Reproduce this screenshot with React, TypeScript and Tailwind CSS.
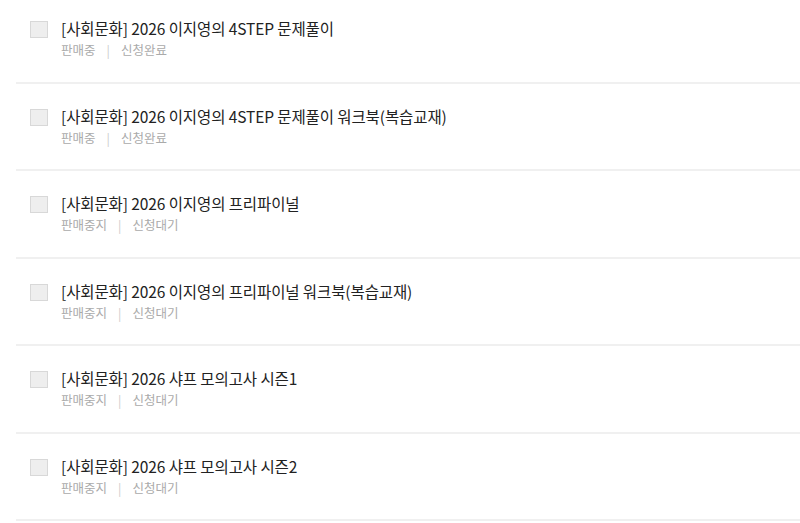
import React from 'react';

type Item = { title: string; sale: string; apply: string };

const items: Item[] = [
  { title: '[사회문화] 2026 이지영의 4STEP 문제풀이', sale: '판매중', apply: '신청완료' },
  { title: '[사회문화] 2026 이지영의 4STEP 문제풀이 워크북(복습교재)', sale: '판매중', apply: '신청완료' },
  { title: '[사회문화] 2026 이지영의 프리파이널', sale: '판매중지', apply: '신청대기' },
  { title: '[사회문화] 2026 이지영의 프리파이널 워크북(복습교재)', sale: '판매중지', apply: '신청대기' },
  { title: '[사회문화] 2026 샤프 모의고사 시즌1', sale: '판매중지', apply: '신청대기' },
  { title: '[사회문화] 2026 샤프 모의고사 시즌2', sale: '판매중지', apply: '신청대기' },
];

const Row: React.FC<{ item: Item }> = ({ item }) => {
  return (
    <li className="h-[87.5px] border-b-2 border-[#f0f0f0] flex items-start pl-[14px]">
      <div className="flex items-start gap-[13px] pt-[22px]">
        <span className="mt-[3px] w-[18px] h-[17px] bg-[#eeeeee] border border-[#d8d8d8] shrink-0" />
        <div className="flex flex-col">
          <p className="text-[15.5px] leading-[20px] text-[#222] tracking-[-0.1px]">{item.title}</p>
          <div className="flex items-center text-[12.5px] leading-[16px] text-[#aaa] mt-[4px]">
            <span>{item.sale}</span>
            <span className="mx-[11px] text-[#ccc]">|</span>
            <span>{item.apply}</span>
          </div>
        </div>
      </div>
    </li>
  );
};

export default function App() {
  return (
    <div
      className="w-[800px] h-[523px] bg-white overflow-hidden"
      style={{ fontFamily: '"Noto Sans CJK KR", "Noto Sans", sans-serif' }}
    >
      <ul className="ml-[16px] -mt-[4px]">
        {items.map((it) => (
          <Row key={it.title} item={it} />
        ))}
      </ul>
    </div>
  );
}
